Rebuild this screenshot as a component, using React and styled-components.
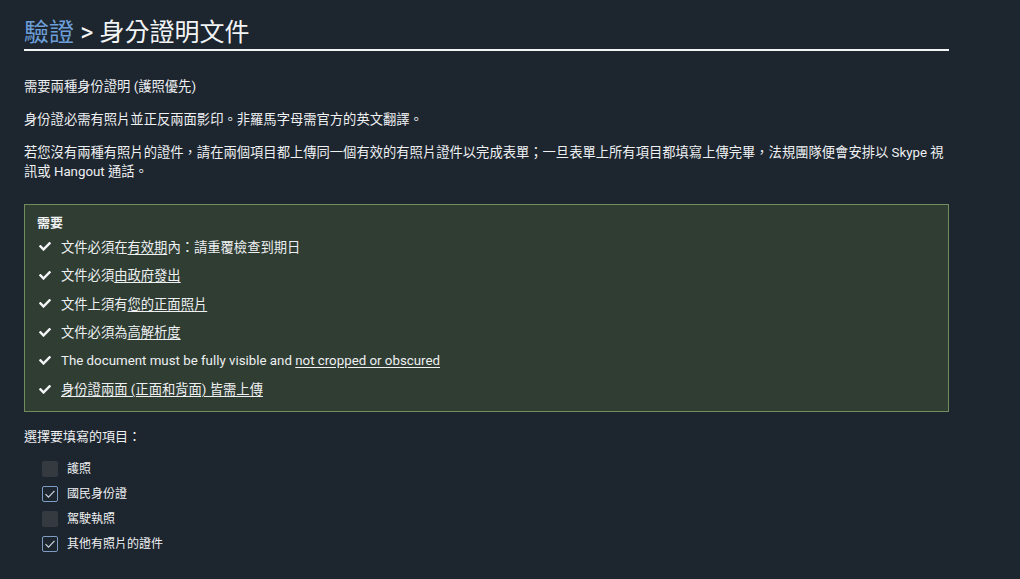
import React from "react";
import styled, { createGlobalStyle } from "styled-components";

const GlobalStyle = createGlobalStyle`
	html, body {
		margin: 0;
		padding: 0;
		background: #1d252e;
	}
	body {
		font-family: Roboto, "Noto Sans CJK TC", sans-serif;
		color: #eef0f2;
	}
`;

const Page = styled.div`
	width: 925px;
	padding: 16px 24px 20px;
`;

const Title = styled.h1`
	margin: 0 0 26px;
	padding-bottom: 0;
	font-size: 25px;
	font-weight: 400;
	line-height: 33px;
	color: #f2f4f6;
	border-bottom: 2px solid #f2f4f6;
`;

const TitleLink = styled.a`
	color: #6c9fd9;
	text-decoration: none;
`;

const Para = styled.p`
	margin: 0 0 14px;
	font-size: 13.3px;
	line-height: 19px;
`;

const Requirements = styled.div`
	margin-top: 23px;
	padding: 9px 12px 8px;
	background: #2f3d33;
	border: 1px solid #6f8d5d;
`;

const BoxTitle = styled.div`
	font-size: 13px;
	font-weight: 700;
	line-height: 18px;
`;

const ReqList = styled.ul`
	list-style: none;
	margin: 0;
	padding: 0;
`;

const ReqItem = styled.li`
	display: flex;
	align-items: center;
	gap: 10px;
	height: 28.5px;
	padding-left: 2px;
	font-size: 13.3px;
`;

const U = styled.span`
	text-decoration: underline;
	text-underline-offset: 2px;
`;

const SectionLabel = styled.div`
	margin: 15px 0 14px;
	font-size: 13px;
	line-height: 20px;
`;

const Options = styled.div`
	display: flex;
	flex-direction: column;
	gap: 9px;
	padding-left: 18px;
`;

const Option = styled.label`
	display: flex;
	align-items: center;
	gap: 9px;
	font-size: 12px;
	line-height: 16px;
`;

const Box = styled.span`
	width: 16px;
	height: 16px;
	box-sizing: border-box;
	border-radius: 2px;
	display: flex;
	align-items: center;
	justify-content: center;
	background: ${p => (p.checked ? "transparent" : "#353a40")};
	border: ${p => (p.checked ? "1.5px solid #7e9dc2" : "none")};
`;

function CheckMark() {
	return (
		<svg width="12" height="10" viewBox="0 0 512 420" fill="#f2f4f6">
			<path d="M173.9 411.4L7.5 245c-10-10-10-26.2 0-36.2l36.2-36.2c10-10 26.2-10 36.2 0L192 284.7 432.1 44.6c10-10 26.2-10 36.2 0l36.2 36.2c10 10 10 26.2 0 36.2L210.1 411.4c-10 10-26.2 10-36.2 0z" />
		</svg>
	);
}

function Tick() {
	return (
		<svg width="12" height="10" viewBox="0 0 12 10" fill="none">
			<path d="M1.5 5.2L4.5 8.2L10.5 1.8" stroke="#c9d6e4" strokeWidth="1.2" />
		</svg>
	);
}

const options = [
	{ label: "護照", checked: false },
	{ label: "國民身份證", checked: true },
	{ label: "駕駛執照", checked: false },
	{ label: "其他有照片的證件", checked: true }
];

export default function App() {
	return (
		<Page>
			<GlobalStyle />
			<Title>
				<TitleLink href="#">驗證</TitleLink> &gt; 身分證明文件
			</Title>
			<Para>需要兩種身份證明 (護照優先)</Para>
			<Para>身份證必需有照片並正反兩面影印。非羅馬字母需官方的英文翻譯。</Para>
			<Para>
				若您沒有兩種有照片的證件，請在兩個項目都上傳同一個有效的有照片證件以完成表單；一旦表單上所有項目都填寫上傳完畢，法規團隊便會安排以 Skype 視訊或 Hangout 通話。
			</Para>
			<Requirements>
				<BoxTitle>需要</BoxTitle>
				<ReqList>
					<ReqItem>
						<CheckMark />
						<span>
							文件必須在<U>有效期</U>內：請重覆檢查到期日
						</span>
					</ReqItem>
					<ReqItem>
						<CheckMark />
						<span>
							文件必須<U>由政府發出</U>
						</span>
					</ReqItem>
					<ReqItem>
						<CheckMark />
						<span>
							文件上須有<U>您的</U><U>正面照片</U>
						</span>
					</ReqItem>
					<ReqItem>
						<CheckMark />
						<span>
							文件必須為<U>高解析度</U>
						</span>
					</ReqItem>
					<ReqItem>
						<CheckMark />
						<span>
							The document must be fully visible and <U>not cropped or obscured</U>
						</span>
					</ReqItem>
					<ReqItem>
						<CheckMark />
						<U>身份證兩面 (正面和背面) 皆需上傳</U>
					</ReqItem>
				</ReqList>
			</Requirements>
			<SectionLabel>選擇要填寫的項目：</SectionLabel>
			<Options>
				{options.map(o => (
					<Option key={o.label}>
						<Box checked={o.checked}>{o.checked && <Tick />}</Box>
						{o.label}
					</Option>
				))}
			</Options>
		</Page>
	);
}
